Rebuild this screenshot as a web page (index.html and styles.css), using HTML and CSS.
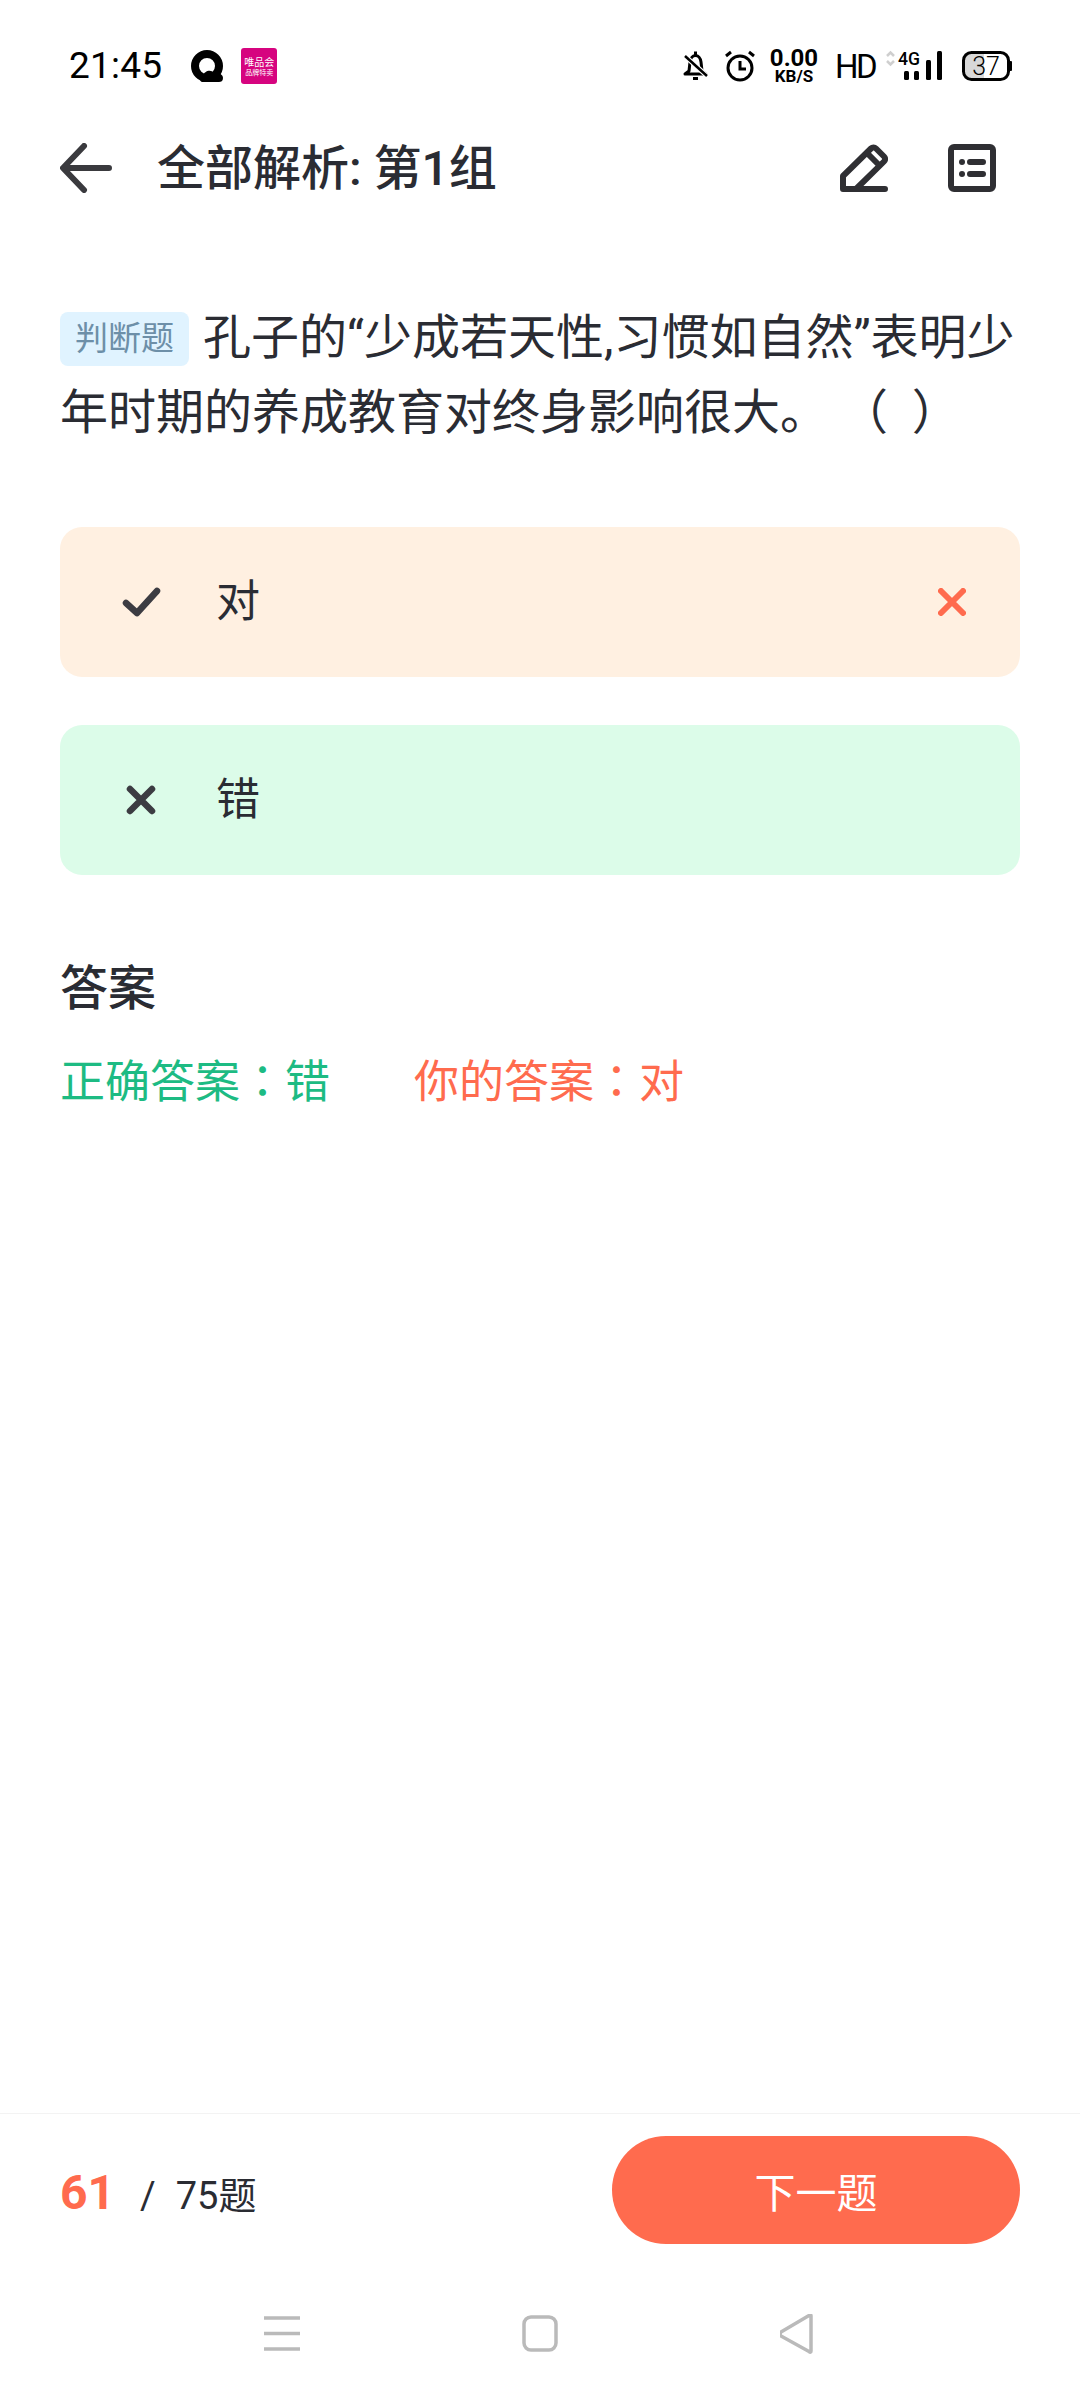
FILE: index.html
```html
<!DOCTYPE html>
<html lang="zh-CN">
<head>
    <meta charset="UTF-8">
    <meta name="viewport" content="width=device-width, initial-scale=1.0">
    <title>全部解析</title>
    <link rel="stylesheet" href="styles.css">
</head>
<body>
    <div class="status-bar">
        <span class="time">21:45</span>
        <svg class="app-q" width="32" height="32" viewBox="0 0 32 32">
            <circle cx="16" cy="16" r="12" fill="none" stroke="#000" stroke-width="8"/>
            <path d="M11 20.500c1.500-3 4-4.300 6.500-3.800 1-1.800 4-2 5.500-.4" fill="none" stroke="#fff" stroke-width="1.500"/>
            <path d="M11 32c-3-1-2-6 1-6 1-5 8-7 11-3 4-1 9 1 9 5 0 3-2 4-4 4z" fill="#000"/>
        </svg>
        <div class="app-vip"><span class="vip-name">唯品会</span><span class="vip-sub">品牌特卖</span></div>

        <div class="status-right">
            <svg width="25" height="32" viewBox="0 0 25 32">
                <path d="M12.500 1.500v3M6 21l1-9c.5-4 3-6.500 5.500-6.500S17.500 8 18 12l1 9 4 3H2z" fill="none" stroke="#000" stroke-width="3" stroke-linejoin="round"/>
                <path d="M10 28.500h5" stroke="#000" stroke-width="3"/>
                <path d="M2 6l22 20" stroke="#fff" stroke-width="5"/>
                <path d="M2 6l22 20" stroke="#000" stroke-width="2.500"/>
            </svg>
            <svg class="alarm" width="30" height="32" viewBox="0 0 30 32">
                <circle cx="15" cy="18" r="12" fill="none" stroke="#000" stroke-width="3"/>
                <path d="M15 11v8h6" fill="none" stroke="#000" stroke-width="3"/>
                <path d="M1 6l5-4M29 6l-5-4" stroke="#000" stroke-width="3"/>
            </svg>
            <div class="speed"><span class="speed-num">0.00</span><span class="speed-unit">KB/S</span></div>
            <span class="hd">HD</span>
            <svg class="signal" width="56" height="32" viewBox="0 0 56 32">
                <path d="M1 6l3.500-3.500L8 6M1 11l3.500 3.500L8 11" fill="none" stroke="#cfcfcf" stroke-width="2.500"/>
                <text x="12" y="15" font-family="Roboto" font-size="19" font-weight="500" textLength="22" lengthAdjust="spacingAndGlyphs">4G</text>
                <rect x="18" y="21" width="5" height="9" rx="1.500"/>
                <rect x="28" y="21" width="5" height="9" rx="1.500"/>
                <rect x="40" y="10" width="5" height="20" rx="1.500"/>
                <rect x="51" y="1" width="5" height="29" rx="1.500"/>
            </svg>
            <svg class="battery" width="50" height="30" viewBox="0 0 50 30">
                <path d="M9 3h13v24H9a6 6 0 0 1-6-6V9a6 6 0 0 1 6-6z" fill="#d8d8d8"/>
                <rect x="1.500" y="1.500" width="45" height="27" rx="8" fill="none" stroke="#000" stroke-width="3"/>
                <rect x="47.500" y="10" width="2.500" height="10" rx="1"/>
                <text x="24" y="24" text-anchor="middle" font-family="Roboto" font-size="25" font-weight="300">37</text>
            </svg>
        </div>
    </div>

    <div class="toolbar">
        <svg class="back" width="52" height="50" viewBox="0 0 52 50">
            <path d="M49 25H4M24 3L3 25l21 22" fill="none" stroke="#3a3a3e" stroke-width="6" stroke-linecap="round" stroke-linejoin="round"/>
        </svg>
        <h1 class="page-title">全部解析: 第1组</h1>
        <svg class="tool-edit" width="48" height="48" viewBox="0 0 48 48">
            <path d="M3 45V32L31 4.500c1.500-1.500 3.500-1.500 5 0L44 12.500c1.500 1.500 1.500 3.500 0 5L16 45zM3 45H45M27 9l11 11" fill="none" stroke="#2f2f33" stroke-width="6" stroke-linecap="round" stroke-linejoin="round"/>
        </svg>
        <svg class="tool-list" width="48" height="48" viewBox="0 0 48 48">
            <rect x="3" y="3" width="42" height="42" rx="3" fill="none" stroke="#2f2f33" stroke-width="6"/>
            <circle cx="14" cy="18" r="3" fill="#2f2f33"/>
            <circle cx="14" cy="30" r="3" fill="#2f2f33"/>
            <path d="M22 18h13M22 30h13" stroke="#2f2f33" stroke-width="6" stroke-linecap="round"/>
        </svg>
    </div>

    <main class="content">
        <p class="question"><span class="tag">判断题</span>孔子的“少成若天性,习惯如自然”表明少年时期的养成教育对终身影响很大。 （&nbsp;&nbsp;）</p>

        <div class="option option-wrong">
            <svg class="option-icon" width="44" height="44" viewBox="0 0 44 44">
                <path d="M6 23l11 10L37 11" fill="none" stroke="#3c3c42" stroke-width="6.500" stroke-linecap="round" stroke-linejoin="round"/>
            </svg>
            <span class="option-text">对</span>
            <svg class="option-mark" width="28" height="28" viewBox="0 0 28 28">
                <path d="M3 3l22 22M25 3L3 25" stroke="#ff6b4e" stroke-width="6" stroke-linecap="round"/>
            </svg>
        </div>
        <div class="option option-right">
            <svg class="option-icon" width="44" height="44" viewBox="0 0 44 44">
                <path d="M10 11l22 22M32 11L10 33" stroke="#3c3c42" stroke-width="6.500" stroke-linecap="round"/>
            </svg>
            <span class="option-text">错</span>
        </div>

        <h2 class="answer-title">答案</h2>
        <div class="answer-row">
            <span class="answer-good">正确答案<span class="colon" lang="zh-TW">：</span>错</span>
            <span class="answer-bad">你的答案<span class="colon" lang="zh-TW">：</span>对</span>
        </div>
    </main>

    <div class="bottom-bar">
        <div class="progress">
            <span class="progress-now">61</span>
            <span class="progress-slash">/</span>
            <span class="progress-all">75题</span>
        </div>
        <button class="next-btn">下一题</button>
    </div>

    <div class="nav-bar">
        <svg width="36" height="40" viewBox="0 0 36 40">
            <path d="M0 4h36M0 19.500h36M0 35h36" stroke="#bababa" stroke-width="3.500"/>
        </svg>
        <svg width="36" height="40" viewBox="0 0 36 40">
            <rect x="2" y="3" width="32" height="33" rx="7" fill="none" stroke="#bababa" stroke-width="3.500"/>
        </svg>
        <svg width="36" height="40" viewBox="0 0 36 40">
            <path d="M31 2v35q0 2-2 .5L1 22q-2-2 0-4L29 1.500q2-1.500 2 .5z" fill="none" stroke="#bababa" stroke-width="3.500" stroke-linejoin="round"/>
        </svg>
    </div>
</body>
</html>
```
FILE: styles.css
```css
* { box-sizing: border-box; }
html, body {
    margin: 0;
    padding: 0;
}
body {
    width: 1080px;
    height: 2400px;
    display: flex;
    flex-direction: column;
    background: #fff;
    color: #2a2c33;
    font-family: Roboto, "Noto Sans CJK SC", sans-serif;
    overflow: hidden;
}

/* status bar */
.status-bar {
    height: 100px;
    padding: 48px 68px 16px 69px;
    display: flex;
    align-items: center;
    color: #000;
}
.time { font-size: 37px; letter-spacing: .2px; line-height: 36px; }
.app-q { margin-left: 29px; }
.app-vip {
    width: 36px;
    height: 36px;
    margin-left: 18px;
    padding-top: 8px;
    background: #d6047f;
    border-radius: 3px;
    color: #fff;
    display: flex;
    flex-direction: column;
    align-items: center;
}
.vip-name { font-size: 10px; line-height: 13px; }
.vip-sub { font-size: 7px; line-height: 8px; }
.status-right {
    margin-left: auto;
    display: flex;
    align-items: center;
}
.alarm { margin-left: 17px; }
.speed {
    width: 48px;
    margin-left: 15px;
    display: flex;
    flex-direction: column;
    align-items: center;
    font-weight: 700;
}
.speed-num { font-size: 24px; line-height: 20px; }
.speed-unit { font-size: 17px; line-height: 16px; }
.hd { margin-left: 17px; font-size: 33px; width: 36px; letter-spacing: -2.500px; }
.signal { margin-left: 15px; overflow: visible; }
.battery { margin-left: 20px; }

/* toolbar */
.toolbar {
    height: 136px;
    padding: 0 84px 0 60px;
    display: flex;
    align-items: center;
}
.page-title {
    margin: 2px 0 0 45px;
    font-size: 48px;
    font-weight: 500;
    line-height: 60px;
}
.tool-edit { margin-left: auto; }
.tool-list { margin-left: 60px; }

/* question */
.content {
    flex: 1;
    padding: 64px 60px 0;
}
.question {
    margin: 0;
    font-size: 48px;
    line-height: 75px;
}
.tag {
    display: inline-block;
    width: 129px;
    height: 54px;
    margin-right: 14px;
    background: #e0f3ff;
    border-radius: 8px;
    color: #6d8fa8;
    font-size: 33px;
    line-height: 54px;
    text-align: center;
    vertical-align: 4px;
}
.option {
    height: 150px;
    margin-top: 48px;
    border-radius: 22px;
    padding: 0 54px 0 60px;
    display: flex;
    align-items: center;
}
.option-wrong { margin-top: 77px; background: #fff0e1; }
.option-right { background: #dcfce9; }
.option-text { margin-left: 52px; font-size: 44px; line-height: 60px; }
.option-mark { margin-left: auto; }

/* answer */
.answer-title {
    margin: 84px 0 0;
    font-size: 48px;
    font-weight: 500;
    line-height: 60px;
}
.answer-row {
    margin-top: 30px;
    display: flex;
    gap: 84px;
    font-size: 45px;
    line-height: 60px;
}
.answer-good { color: #1dbb83; }
.answer-bad { color: #ff6b4e; }
.colon { font-family: "Noto Sans CJK TC", sans-serif; }

/* bottom */
.bottom-bar {
    height: 155px;
    padding: 22px 60px 0;
    border-top: 1px solid #f3f3f3;
    display: flex;
    justify-content: space-between;
    align-items: flex-start;
}
.progress {
    height: 108px;
    display: flex;
    align-items: baseline;
    padding-top: 28px;
}
.progress-now { color: #ff6b4e; font-size: 48px; font-weight: 700; }
.progress-slash { margin-left: 25px; font-size: 38px; }
.progress-all { margin-left: 20px; font-size: 38px; }
.next-btn {
    width: 408px;
    height: 108px;
    border: none;
    border-radius: 54px;
    background: #ff6b4e;
    color: #fff;
    font-family: inherit;
    font-size: 41px;
}
.nav-bar {
    height: 132px;
    display: flex;
    justify-content: center;
    gap: 222px;
    padding-top: 46px;
}
```
